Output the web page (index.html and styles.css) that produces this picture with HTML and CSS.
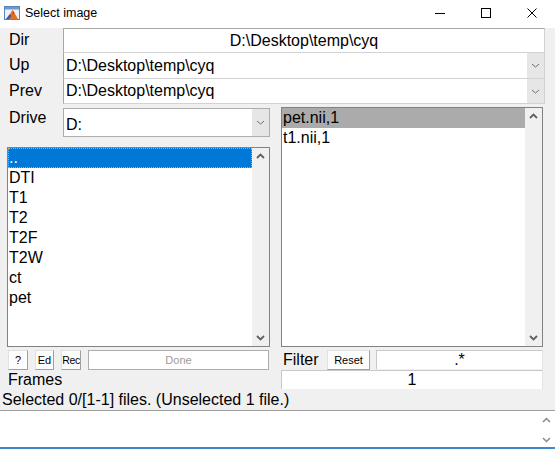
FILE: index.html
```html
<!DOCTYPE html>
<html>
<head>
<meta charset="utf-8">
<title>Select image</title>
<link rel="stylesheet" href="styles.css">
</head>
<body>
<div class="window">
  <header class="titlebar">
    <svg class="appicon" viewBox="0 0 16 16">
      <rect x="0.5" y="1.5" width="15" height="13" fill="#eaf1fa" stroke="#5d84b8"/>
      <rect x="1" y="2" width="14" height="2.5" fill="#6f98cf"/>
      <polygon points="2,14 6,9 8.5,5 10.5,8 14,14" fill="#e8701c"/>
      <polygon points="2,14 6,9 7.5,11 5,14" fill="#2d5fae"/>
      <polygon points="8.5,5 10.5,8 9.5,10" fill="#c0391b"/>
    </svg>
    <span class="title">Select image</span>
    <div class="controls">
      <span class="ctl"><svg viewBox="0 0 10 10"><path d="M0 5.5 H10" stroke="#000" stroke-width="1"/></svg></span>
      <span class="ctl"><svg viewBox="0 0 10 10"><rect x="0.5" y="0.5" width="9" height="9" fill="none" stroke="#000" stroke-width="1"/></svg></span>
      <span class="ctl"><svg viewBox="0 0 10 10"><path d="M0.5 0.5 L9.5 9.5 M9.5 0.5 L0.5 9.5" stroke="#000" stroke-width="1"/></svg></span>
    </div>
  </header>

  <section class="paths">
    <div class="lbl">Dir</div>
    <div class="field dir">D:\Desktop\temp\cyq</div>
    <div class="lbl">Up</div>
    <div class="field combo up"><span class="val">D:\Desktop\temp\cyq</span><span class="drop"><svg width="9" height="5" viewBox="0 0 9 5"><path d="M1 1 L4.5 4 L8 1" fill="none" stroke="#707070" stroke-width="1"/></svg></span></div>
    <div class="lbl">Prev</div>
    <div class="field combo prev"><span class="val">D:\Desktop\temp\cyq</span><span class="drop"><svg width="9" height="5" viewBox="0 0 9 5"><path d="M1 1 L4.5 4 L8 1" fill="none" stroke="#707070" stroke-width="1"/></svg></span></div>
  </section>

  <section class="panes">
    <div class="left">
      <div class="drive-row">
        <div class="lbl drive-lbl">Drive</div>
        <div class="drive"><span class="val">D:</span><span class="drop"><svg width="9" height="5" viewBox="0 0 9 5"><path d="M1 1 L4.5 4 L8 1" fill="none" stroke="#707070" stroke-width="1"/></svg></span></div>
      </div>
      <div class="list dirs">
        <ul class="items">
          <li class="sel-focus">..</li>
          <li>DTI</li>
          <li>T1</li>
          <li>T2</li>
          <li>T2F</li>
          <li>T2W</li>
          <li>ct</li>
          <li>pet</li>
        </ul>
        <div class="scroll">
          <svg width="9" height="6" viewBox="0 0 9 6"><path d="M1 5 L4.5 1.5 L8 5" fill="none" stroke="#606060" stroke-width="1.8"/></svg>
          <svg width="9" height="6" viewBox="0 0 9 6"><path d="M1 1 L4.5 4.5 L8 1" fill="none" stroke="#606060" stroke-width="1.8"/></svg>
        </div>
      </div>
      <div class="buttons">
        <div class="btn b-help">?</div>
        <div class="btn b-ed">Ed</div>
        <div class="btn b-rec">Rec</div>
        <div class="btn b-done">Done</div>
      </div>
      <div class="frames-lbl">Frames</div>
    </div>
    <div class="right">
      <div class="list files">
        <ul class="items">
          <li class="sel-gray">pet.nii,1</li>
          <li>t1.nii,1</li>
        </ul>
        <div class="scroll">
          <svg width="9" height="6" viewBox="0 0 9 6"><path d="M1 5 L4.5 1.5 L8 5" fill="none" stroke="#606060" stroke-width="1.8"/></svg>
          <svg width="9" height="6" viewBox="0 0 9 6"><path d="M1 1 L4.5 4.5 L8 1" fill="none" stroke="#606060" stroke-width="1.8"/></svg>
        </div>
      </div>
      <div class="filter-row">
        <div class="filter-lbl">Filter</div>
        <div class="btn b-reset">Reset</div>
        <div class="box filter-box">.*</div>
      </div>
      <div class="box frames-box">1</div>
    </div>
  </section>

  <div class="status">Selected 0/[1-1] files. (Unselected 1 file.)</div>

  <div class="console">
    <div class="console-text"></div>
    <div class="console-scroll">
      <svg width="9" height="6" viewBox="0 0 9 6"><path d="M1 5 L4.5 1.5 L8 5" fill="none" stroke="#8a8a8a" stroke-width="1.5"/></svg>
      <svg width="9" height="6" viewBox="0 0 9 6"><path d="M1 1 L4.5 4.5 L8 1" fill="none" stroke="#8a8a8a" stroke-width="1.5"/></svg>
    </div>
  </div>
  <div class="edge"></div>
</div>
</body>
</html>
```

FILE: styles.css
```css
* { box-sizing: border-box; }
html, body { margin: 0; padding: 0; }
body {
  width: 555px;
  height: 449px;
  overflow: hidden;
  font-family: "Liberation Sans", Arial, sans-serif;
  font-size: 16px;
  color: #000;
  background: #f0f0f0;
}
.window {
  width: 555px;
  height: 449px;
  display: flex;
  flex-direction: column;
}

/* title bar */
.titlebar {
  flex: none;
  height: 28px;
  padding-bottom: 3px;
  background: #fff;
  display: flex;
  align-items: center;
}
.appicon { width: 16px; height: 16px; margin-left: 4px; }
.title { margin-left: 5px; font-size: 12.5px; }
.controls { margin-left: auto; display: flex; height: 25px; }
.ctl {
  width: 46px;
  height: 25px;
  display: flex;
  align-items: center;
  justify-content: center;
}
.ctl svg { width: 10px; height: 10px; }

/* path rows */
.paths {
  flex: none;
  display: grid;
  grid-template-columns: 63px 482px;
  grid-template-rows: 24px 26px 26px;
}
.lbl {
  padding-left: 9px;
  display: flex;
  align-items: center;
}
.field {
  background: #fff;
  border: 1px solid #d2d2d2;
  border-left-color: #a8a8a8;
  border-bottom: none;
  display: flex;
  align-items: center;
}
.field.dir {
  justify-content: center;
  border-top-color: #a8a8a8;
}
.field.prev { border-bottom: 1px solid #d2d2d2; }
.val { flex: 1; padding-left: 2px; white-space: nowrap; overflow: hidden; }
.drop {
  width: 17px;
  align-self: stretch;
  background: #e6e6e6;
  display: flex;
  align-items: center;
  justify-content: center;
}

/* panes */
.panes {
  flex: none;
  height: 283px;
  margin-top: 3px;
  padding-left: 7px;
  display: flex;
  gap: 11px;
}
.left { width: 263px; display: flex; flex-direction: column; }
.right { width: 262px; display: flex; flex-direction: column; }

.drive-row { display: flex; height: 29px; margin-top: 1px; flex: none; }
.drive-lbl {
  width: 56px;
  padding-left: 2px;
  align-items: flex-start;
  line-height: 20px;
}
.drive {
  width: 207px;
  border: 1px solid #adadad;
  background: #fff;
  display: flex;
  align-items: center;
}
.drive .val { padding-top: 4px; }

.list {
  flex: none;
  border: 1px solid #828282;
  background: #fff;
  display: flex;
}
.dirs { height: 200px; margin-top: 10px; }
.files { height: 240px; }
.items {
  flex: 1;
  list-style: none;
  margin: 0;
  padding: 0;
  overflow: hidden;
}
.items li {
  height: 20px;
  line-height: 20px;
  padding-left: 1px;
  white-space: nowrap;
}
.sel-focus {
  background: #0078d7;
  color: #fff;
  outline: 1px dotted #f39a2e;
  outline-offset: -1px;
}
.sel-gray { background: #ababab; }
.scroll {
  width: 17px;
  background: #f0f0f0;
  display: flex;
  flex-direction: column;
  justify-content: space-between;
  align-items: center;
  padding: 5px 0 5px;
}

/* buttons */
.buttons {
  flex: none;
  display: flex;
  gap: 7px;
  height: 20px;
  margin-top: 3px;
  padding-left: 1px;
}
.btn {
  height: 20px;
  background: #fdfdfd;
  border: 1px solid;
  border-color: #e1e1e1 #a0a0a0 #a0a0a0 #e1e1e1;
  font-size: 11px;
  line-height: 18px;
  text-align: center;
  overflow: hidden;
  white-space: nowrap;
}
.b-help { width: 20px; }
.b-ed { width: 19px; }
.b-rec {
  width: 20px;
  padding: 0;
  font-size: 10.5px;
  letter-spacing: -0.35px;
}
.b-done {
  width: 181px;
  background: #fff;
  border-color: #adadad;
  color: #9b9b9b;
}
.frames-lbl {
  height: 20px;
  line-height: 20px;
  padding-left: 1px;
}

.filter-row {
  flex: none;
  display: flex;
  height: 20px;
  margin-top: 3px;
}
.filter-lbl {
  width: 46px;
  padding-left: 2px;
  line-height: 20px;
}
.b-reset { width: 43px; }
.box {
  background: #fff;
  border-top: 1px solid #c8c8c8;
  border-left: 1px solid #c8c8c8;
  border-right: 1px solid #e3e3e3;
  text-align: center;
  line-height: 18px;
}
.filter-box { width: 167px; margin-left: 6px; height: 19px; }
.frames-box { width: 262px; height: 19px; }

/* status + console */
.status {
  flex: none;
  height: 20px;
  line-height: 20px;
  padding-left: 2px;
  white-space: nowrap;
}
.console {
  flex: none;
  height: 37px;
  border-top: 1px solid #a0a0a0;
  background: #fff;
  display: flex;
}
.console-text { flex: 1; }
.console-scroll {
  width: 17px;
  display: flex;
  flex-direction: column;
  justify-content: space-between;
  align-items: center;
  padding: 6px 0 4px;
}
.edge { flex: none; height: 2px; background: #3f88c8; }
```
